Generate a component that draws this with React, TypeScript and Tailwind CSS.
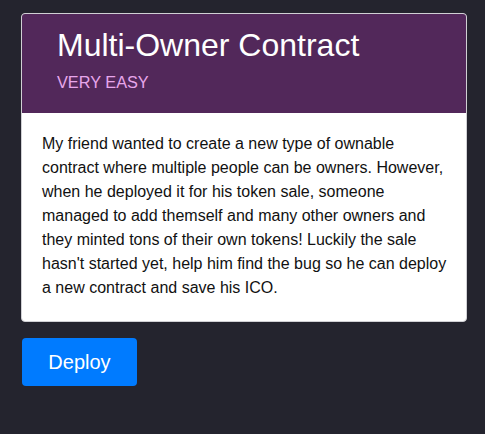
export default function App() {
  return (
    <div
      className="min-h-screen bg-[#24242e] px-[21px] pt-[13px]"
      style={{ fontFamily: '"Liberation Sans", Arial, sans-serif' }}
    >
      <div className="w-[446px] overflow-hidden rounded-[4px] border border-[#d0d0d4] bg-white">
        <div className="h-[99px] bg-[#52285a] px-[35px] pt-[12px]">
          <h1 className="text-[32px] leading-[38px] text-white">Multi-Owner Contract</h1>
          <p className="mt-[8px] text-[16.3px] leading-[20px] text-[#e7a6eb]">VERY EASY</p>
        </div>
        <div className="pl-5 pr-4 pt-[19px] pb-[21px] text-[16px] leading-[24px] text-[#111]">
          My friend wanted to create a new type of ownable contract where multiple people can be
          owners. However, when he deployed it for his token sale, someone managed to add themself
          and many other owners and they minted tons of their own tokens! Luckily the sale hasn't
          started yet, help him find the bug so he can deploy a new contract and save his ICO.
        </div>
      </div>
      <button className="ml-px mt-4 h-12 w-[115px] rounded-[4px] bg-[#007bff] text-[20px] text-white">
        Deploy
      </button>
    </div>
  );
}
